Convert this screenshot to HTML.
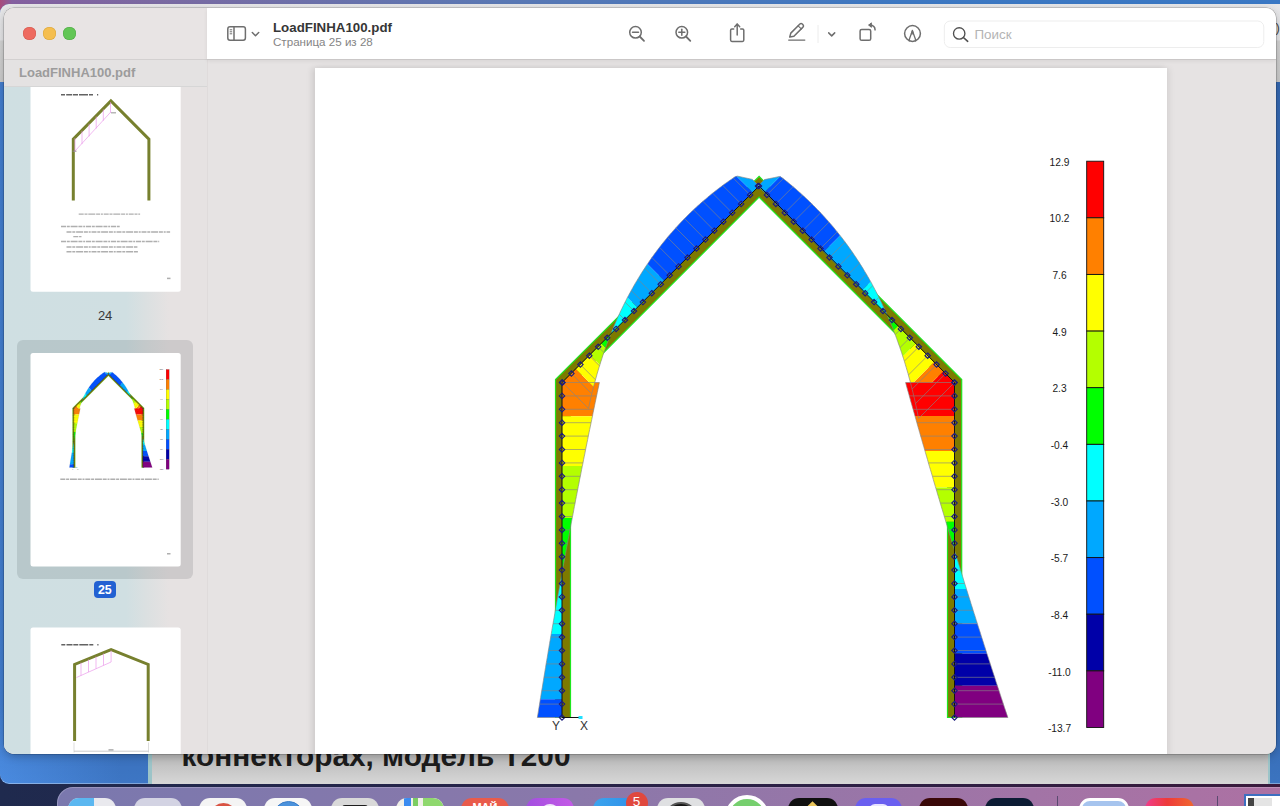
<!DOCTYPE html>
<html><head><meta charset="utf-8">
<style>
*{margin:0;padding:0;box-sizing:border-box}
html,body{width:1280px;height:806px;overflow:hidden;background:linear-gradient(90deg,#1f2a4e 0,#25254a 400px,#2e1f44 900px,#3a1a3c 1280px);font-family:"Liberation Sans",sans-serif}
.a{position:absolute}
#topstrip{left:0;top:0;width:1280px;height:14px;background:linear-gradient(90deg,#a84a7c 0px,#8460a0 12px,#7a6aa2 160px,#5a78b4 500px,#3d78c2 900px,#3a78c4 1280px)}
#bw{left:0;top:3.5px;width:1300px;height:780px;border-radius:9px 0 0 9px;box-shadow:inset 0 -1px 0 rgba(255,255,255,.35);background:linear-gradient(180deg,rgba(0,0,40,.10) 700px,rgba(0,0,0,0) 780px),linear-gradient(90deg,#4a8be0,#3d76c4 120px,#3b74c0);overflow:hidden}
#bwtitle{left:0;top:0;width:1300px;height:78.5px;background:linear-gradient(180deg,#e6e6e8 0,#e2e2e4 36px,#d2d2d2 37px,#c9c9c9 78px)}
#gw{left:148px;top:700px;width:1122px;height:83.5px;background:linear-gradient(180deg,#b0b0b0 0,#b8b8b8 53px,#c8c8c8 70px,#d6d6d6 83px);border-left:4px solid #9cc4c8;border-right:2px solid #9cc4c8}
#gwtext{left:181.6px;top:739.4px;font-size:29.8px;font-weight:700;color:#1c1c1c;white-space:nowrap;letter-spacing:0}
#dock{left:57px;top:787px;width:1300px;height:60px;border-radius:16px;background:linear-gradient(90deg,#7a78ae 0%,#8a78aa 40%,#a274a6 75%,#b070a2 100%);box-shadow:inset 0 0 0 1px rgba(255,255,255,.22)}
#win{left:3.5px;top:7.5px;width:1272.5px;height:746px;border-radius:10px;overflow:hidden;background:#e6e3e3;box-shadow:0 0 0 0.5px rgba(0,0,0,.3),0 3px 8px rgba(0,0,0,.22)}
#side{left:0;top:0;width:203.5px;height:746px;background:#e7e3e3}
#sidetb{left:0;top:0;width:203.5px;height:52.6px;background:#e8e4e4;border-bottom:1px solid #d3d0d0}
#sidehdr{left:0;top:52px;width:203.5px;height:27px;background:#e4e2e2;border-bottom:1px solid #d6d6d6}
#sidehdr span{position:absolute;left:15.5px;top:5.5px;font-size:13px;font-weight:700;color:#9c9c9c;white-space:nowrap}
#thumbs{left:0;top:79px;width:203.5px;height:667px;background:linear-gradient(90deg,#cfdfe2 0px,#d0dfe2 122px,#dbe0e1 142px,#e6e2e2 165px,#e6e2e2 203px)}
#tb{left:203.5px;top:0;width:1069px;height:52.6px;background:#fff;border-bottom:1.2px solid #cac7c7;box-shadow:0 1px 4px rgba(0,0,0,.07)}
#main{left:203.5px;top:52px;width:1069px;height:694px;background:#e6e3e3}
#page{left:311.4px;top:60.2px;width:852.6px;height:700px;background:#fff;box-shadow:-3px 0 6px rgba(0,0,0,.10),3px 0 6px rgba(0,0,0,.06)}
.t{position:absolute;white-space:nowrap}
</style></head><body>
<div id="topstrip" class="a"></div>
<div id="bw" class="a"><div id="bwtitle" class="a"></div></div>
<div id="gw" class="a"></div>
<div class="t" style="left:1275.5px;top:20px;font-size:13px;color:#444">)</div>
<div id="gwtext" class="a">коннекторах, модель T200</div>
<div id="dock" class="a"></div>
<div class="a" style="left:0;top:0;width:1280px;height:806px;overflow:hidden">
<div class="a" style="left:68px;top:798px;width:48px;height:48px;border-radius:11px;overflow:hidden;background:#e9e9ee"><div class="a" style="left:0;top:0;width:26px;height:48px;background:#5bb7f0"></div></div>
<div class="a" style="left:134px;top:798px;width:48.4px;height:48px;border-radius:11px;background:#d3d3e3"></div>
<div class="a" style="left:199.2px;top:798px;width:47.5px;height:48px;border-radius:11px;background:#f4f4f4;overflow:hidden"><div class="a" style="left:10.5px;top:4.7px;width:27px;height:27px;border-radius:50%;background:#d95343"></div></div>
<div class="a" style="left:264.2px;top:798px;width:47.9px;height:48px;border-radius:11px;background:#f6f6f6;overflow:hidden"><div class="a" style="left:8.5px;top:3px;width:31px;height:31px;border-radius:50%;background:#4b92dc;border:1px solid #3a7cc8"></div></div>
<div class="a" style="left:330.5px;top:798px;width:48px;height:48px;border-radius:11px;background:#d9d9d9;overflow:hidden"><div class="a" style="left:11.5px;top:6.5px;width:25.5px;height:30px;border-radius:3px;background:#1e1e1e"></div></div>
<div class="a" style="left:396px;top:798px;width:47.5px;height:48px;border-radius:11px;background:#f0efe8;overflow:hidden"><div class="a" style="left:8px;top:0;width:6.5px;height:48px;background:#3b8cf0"></div><div class="a" style="left:17px;top:0;width:5px;height:48px;background:#7ccd62"></div><div class="a" style="left:27px;top:0;width:21px;height:48px;background:#8fd86e;border-radius:0 11px 0 0"></div></div>
<div class="a" style="left:461px;top:798px;width:47.8px;height:48px;border-radius:11px;background:#e95b4b;overflow:hidden"><div class="t" style="left:0;width:47.8px;text-align:center;top:2.5px;font-size:11px;font-weight:700;color:#fff">МАЙ</div></div>
<div class="a" style="left:525.7px;top:798px;width:48.5px;height:48px;border-radius:11px;background:linear-gradient(90deg,#a34fe0,#c45ae6);overflow:hidden"><div class="a" style="left:14px;top:6px;width:20px;height:20px;border-radius:50%;background:#f2e8fa"></div></div>
<div class="a" style="left:592.6px;top:798px;width:48.4px;height:48px;border-radius:11px;background:linear-gradient(90deg,#3ba4ee,#2f8ee8)"></div>
<div class="a" style="left:625.6px;top:791.6px;width:22px;height:22px;border-radius:50%;background:#e0483e"></div>
<div class="t" style="left:625.6px;width:22px;text-align:center;top:793.5px;font-size:13.5px;color:#fff">5</div>
<div class="a" style="left:657.3px;top:798px;width:47.7px;height:48px;border-radius:11px;background:#dfe0e2;overflow:hidden"><div class="a" style="left:7px;top:3.5px;width:34px;height:34px;border-radius:50%;background:#151515;border:2px solid #555"></div></div>
<div class="a" style="left:725px;top:795px;width:44px;height:44px;border-radius:50%;background:#76cf6e;border:4px solid #fff"></div>
<div class="a" style="left:788px;top:798px;width:49.5px;height:48px;border-radius:11px;background:#101010;overflow:hidden"><div class="a" style="left:19.5px;top:5px;width:9px;height:9px;transform:rotate(45deg);background:#e8c45a"></div></div>
<div class="a" style="left:854.8px;top:798px;width:47px;height:48px;border-radius:11px;background:#6a5ff0;overflow:hidden"><div class="a" style="left:14px;top:6px;width:20px;height:14px;border-radius:6px;background:#e8e4ff"></div></div>
<div class="a" style="left:918.6px;top:798px;width:49.4px;height:48px;border-radius:11px;background:#3a0808"></div>
<div class="a" style="left:984.6px;top:798px;width:49.7px;height:48px;border-radius:11px;background:#0c1c34"></div>
<div class="a" style="left:1057px;top:796px;width:1px;height:12px;background:#5a4a70"></div>
<div class="a" style="left:1079.4px;top:798px;width:49.2px;height:48px;border-radius:11px;background:#a6c4ee;border:3.5px solid #fff"></div>
<div class="a" style="left:1144.5px;top:798px;width:49px;height:48px;border-radius:11px;background:linear-gradient(90deg,#f03c8c,#ee3a3a 45%,#f0682e)"></div>
<div class="a" style="left:1217.3px;top:796px;width:1px;height:12px;background:#5a4a70"></div>
<div class="a" style="left:1244px;top:794px;width:40px;height:20px;background:#fff;border:2px solid #3c6fc0"><div class="a" style="left:2px;top:2px;width:6px;height:20px;background:#444"></div><div class="a" style="left:8px;top:2px;width:18px;height:20px;background:#e4e4e4"></div></div>
</div>
<div id="win" class="a">
  <div id="side" class="a">
    <div id="sidetb" class="a"></div>
    <div id="sidehdr" class="a"><span>LoadFINHA100.pdf</span></div>
    <div id="thumbs" class="a"></div>
    <div class="a" style="left:0;top:79px;width:203.5px;height:667px;overflow:hidden"><div class="a" style="left:0;top:-79px;width:203.5px;height:746px">
    <div class="a" style="left:13.6px;top:332.5px;width:175.5px;height:238.5px;border-radius:6px;background:linear-gradient(90deg,#b8c8cb 0px,#b9c8cb 109px,#c4c9ca 129px,#cdcacb 152px)"></div>
    <svg class="a" style="left:0;top:0" width="203.5" height="746" viewBox="3.5 7.5 203.5 746">
      <g fill="#fff">
        <rect x="30" y="78" width="150.2" height="213.3" rx="2.5"/>
        <rect x="30" y="352.5" width="150.2" height="213.4" rx="2.5"/>
        <rect x="30" y="627.1" width="150.2" height="213.4" rx="2.5"/>
      </g>
      <!-- page 24 -->
      <g>
        <line x1="60.5" y1="94.3" x2="101.5" y2="94.3" stroke="#222" stroke-width="1.6" opacity="0.7" stroke-dasharray="4 1.2 6 0.8 5 1 9 1 4"/>
        <polyline points="72.8,200.1 72.8,138.7 110.4,100.5 148.4,138.7 148.4,200.1" fill="none" stroke="#77802e" stroke-width="3" stroke-linejoin="miter"/>
        <g stroke="#e88ae8" stroke-width="0.6" fill="none">
          <line x1="73.6" y1="151.5" x2="110.4" y2="111.4"/>
          <line x1="74.5" y1="137.5" x2="74.5" y2="151"/>
          <line x1="81.5" y1="130.3" x2="81.5" y2="143.6"/>
          <line x1="88.6" y1="123.2" x2="88.6" y2="135.8"/>
          <line x1="95.7" y1="116" x2="95.7" y2="128"/>
          <line x1="102.8" y1="108.8" x2="102.8" y2="120.2"/>
          <line x1="110" y1="101.5" x2="110" y2="112"/>
        </g>
        <rect x="110.5" y="111.5" width="5" height="1.5" fill="#888" opacity="0.6"/>
        <rect x="72" y="150" width="4" height="1.5" fill="#888" opacity="0.6"/>
        <g stroke="#7a7a7a" opacity="0.6" fill="none">
          <line x1="78.2" y1="213.6" x2="139.6" y2="213.6" stroke-width="1.4" stroke-dasharray="5 0.8 3 0.8 7 0.8 4 0.8 2 0.8"/>
          <line x1="60.5" y1="226.0" x2="119.2" y2="226.0" stroke-width="1.4" stroke-dasharray="5 0.8 3 0.8 7 0.8 4 0.8 2 0.8"/>
          <line x1="66.0" y1="231.5" x2="169.6" y2="231.5" stroke-width="1.5" stroke-dasharray="5 0.8 3 0.8 7 0.8 4 0.8 2 0.8"/>
          <line x1="72.8" y1="236.1" x2="81.0" y2="236.1" stroke-width="1.3" stroke-dasharray="5 0.8 3 0.8 7 0.8 4 0.8 2 0.8"/>
          <line x1="60.5" y1="241.0" x2="158.7" y2="241.0" stroke-width="1.4" stroke-dasharray="5 0.8 3 0.8 7 0.8 4 0.8 2 0.8"/>
          <line x1="66.0" y1="246.5" x2="136.9" y2="246.5" stroke-width="1.5" stroke-dasharray="5 0.8 3 0.8 7 0.8 4 0.8 2 0.8"/>
          <line x1="66.0" y1="251.3" x2="137.4" y2="251.3" stroke-width="1.5" stroke-dasharray="5 0.8 3 0.8 7 0.8 4 0.8 2 0.8"/>
          <line x1="166.5" y1="277.9" x2="170.0" y2="277.9" stroke-width="1.5" stroke-dasharray="5 0.8 3 0.8 7 0.8 4 0.8 2 0.8"/>
        </g>
      </g>
      <!-- page 25 -->
      <use href="#chart" transform="translate(-25.65,340.7) scale(0.1761)"/>
      <g stroke="#7a7a7a" opacity="0.6" fill="none">
        <line x1="59.8" y1="478.8" x2="158.2" y2="478.8" stroke-width="1.4" stroke-dasharray="5 0.8 3 0.8 7 0.8 4 0.8 2 0.8"/>
        <line x1="166.5" y1="553.2" x2="170.0" y2="553.2" stroke-width="1.5" stroke-dasharray="5 0.8 3 0.8 7 0.8 4 0.8 2 0.8"/>
      </g>
      <!-- page 26 -->
      <g>
        <line x1="60.8" y1="644.2" x2="102.2" y2="644.2" stroke="#222" stroke-width="1.6" opacity="0.7" stroke-dasharray="4 1.2 6 0.8 5 1 9 1 4"/>
        <polyline points="74.1,740.5 74.1,663.9 110.6,649 147.7,663.9 147.7,740.5" fill="none" stroke="#77802e" stroke-width="3" stroke-linejoin="miter"/>
        <g stroke="#e88ae8" stroke-width="0.6" fill="none">
          <line x1="76" y1="677" x2="110.6" y2="661.5"/>
          <line x1="80.5" y1="662" x2="80.5" y2="675"/>
          <line x1="88" y1="659" x2="88" y2="671.5"/>
          <line x1="95.5" y1="656" x2="95.5" y2="668.2"/>
          <line x1="103" y1="653" x2="103" y2="664.8"/>
          <line x1="110.6" y1="650" x2="110.6" y2="661.5"/>
        </g>
        <line x1="73.5" y1="750.7" x2="148" y2="750.7" stroke="#aaa" stroke-width="0.6"/>
        <line x1="73.5" y1="742" x2="73.5" y2="752" stroke="#bbb" stroke-width="0.5"/>
        <line x1="148" y1="742" x2="148" y2="752" stroke="#bbb" stroke-width="0.5"/>
        <rect x="108" y="748.8" width="5" height="1.2" fill="#999"/>
      </g>
    </svg>
    <div class="t" style="left:94.4px;top:300.6px;font-size:13px;color:#3a3a3a">24</div>
    <div class="a" style="left:90.5px;top:573.2px;width:22.2px;height:17px;border-radius:4px;background:#2261d2"></div>
    <div class="t" style="left:94.4px;top:575.8px;font-size:12.4px;font-weight:700;color:#fff">25</div>
    </div></div>
  </div>
  <div id="main" class="a"></div>
  <div class="a" style="left:203.5px;top:52px;width:1px;height:694px;background:#dfdbdb"></div>
  <div id="page" class="a"></div>
<svg class="a" style="left:0;top:0" width="1272.5" height="746" viewBox="3.5 7.5 1272.5 746">
<g id="chart">
<!--CHART--><polygon points="555.0,717.0 555.0,379.0 758.6,175.9 961.2,379.0 961.2,717.0 947.0,717.0 947.0,385.1 758.6,196.7 570.0,385.3 570.0,717.0" fill="#7d7a00" stroke="#1ee61e" stroke-width="1.2"/>
<g><polygon points="561.5,382.0 598.9,382.0 598.5,384.1 598.1,386.2 597.6,388.3 597.2,390.4 596.7,392.6 596.3,394.7 595.8,396.8 595.4,398.9 595.0,401.0 594.5,403.1 594.1,405.2 593.6,407.4 593.2,409.5 592.8,411.6 592.3,413.7 591.9,415.8 561.5,415.8" fill="#ff8000"/><polygon points="561.5,415.8 591.9,415.8 591.5,417.9 591.0,419.9 590.6,422.0 590.2,424.1 589.8,426.2 589.3,428.2 588.9,430.3 588.5,432.4 588.1,434.4 587.7,436.5 587.2,438.6 586.8,440.6 586.4,442.7 586.0,444.8 585.6,446.9 585.1,448.9 584.7,451.0 584.3,453.1 583.9,455.1 583.5,457.2 583.1,459.3 582.7,461.4 582.2,463.4 581.8,465.5 561.5,465.5" fill="#ffff00"/><polygon points="561.5,465.5 581.8,465.5 581.4,467.5 581.0,469.5 580.6,471.5 580.2,473.5 579.9,475.5 579.5,477.5 579.1,479.5 578.7,481.5 578.3,483.5 577.9,485.5 577.5,487.5 577.1,489.5 576.7,491.6 576.3,493.6 575.9,495.6 575.6,497.6 575.2,499.6 574.8,501.6 574.4,503.6 574.0,505.6 573.6,507.6 573.2,509.6 572.9,511.6 572.5,513.6 572.1,515.6 571.7,517.6 561.5,517.6" fill="#b4ff00"/><polygon points="561.5,517.6 571.7,517.6 571.3,519.6 570.9,521.6 570.6,523.6 570.2,525.7 569.8,527.7 569.4,529.7 569.0,531.7 568.7,533.7 568.3,535.7 567.9,537.7 567.5,539.8 567.2,541.8 566.8,543.8 566.4,545.8 566.0,547.8 565.7,549.8 565.3,551.9 564.9,553.9 564.5,555.9 564.2,557.9 563.8,559.9 563.4,561.9 563.1,563.9 562.7,566.0 562.3,568.0 562.0,570.0 561.6,572.0 561.5,572.0" fill="#00ff00"/><polygon points="561.5,572.0 561.6,572.0 561.2,574.0 560.9,576.1 560.5,578.1 560.1,580.2 559.7,582.2 559.4,584.3 559.0,586.4 558.6,588.4 558.3,590.5 557.9,592.5 557.5,594.5 557.2,596.6 556.8,598.6 556.4,600.7 556.1,602.8 555.7,604.8 555.4,606.9 555.0,608.9 554.6,611.0 554.3,613.0 553.9,615.0 553.6,617.1 553.2,619.1 552.8,621.2 552.5,623.2 552.1,625.3 551.8,627.4 551.4,629.4 551.1,631.5 550.7,633.5 561.5,633.5" fill="#00ffff"/><polygon points="561.5,633.5 550.7,633.5 550.4,635.5 550.0,637.6 549.7,639.6 549.3,641.6 549.0,643.7 548.6,645.7 548.3,647.8 547.9,649.8 547.6,651.8 547.3,653.9 546.9,655.9 546.6,658.0 546.2,660.0 545.9,662.0 545.5,664.1 545.2,666.1 544.9,668.1 544.5,670.2 544.2,672.2 543.8,674.2 543.5,676.3 543.2,678.3 542.8,680.4 542.5,682.4 542.2,684.4 541.8,686.5 541.5,688.5 541.2,690.6 540.8,692.6 540.5,694.6 540.2,696.7 539.8,698.7 561.5,698.7" fill="#00a8ff"/><polygon points="561.5,698.7 539.8,698.7 539.5,700.7 539.2,702.8 538.9,704.8 538.5,706.8 538.2,708.9 537.9,710.9 537.6,712.9 537.2,715.0 536.9,717.0 561.5,717.0" fill="#0050ff"/><polygon points="562.0,382.0 588.0,408.0 588.5,405.5 589.0,403.1 589.6,400.6 590.2,398.2 590.7,395.8 591.3,393.4 591.9,391.0 592.5,388.6 593.1,386.2 575.4,368.6" fill="#ff8000"/><polygon points="575.4,368.6 593.1,386.2 593.7,384.0 594.3,381.8 594.9,379.5 595.5,377.3 596.1,375.1 596.8,372.9 597.4,370.7 598.1,368.6 598.7,366.4 599.4,364.2 589.6,354.4" fill="#ffff00"/><polygon points="589.6,354.4 599.4,364.2 600.1,362.1 600.8,359.9 601.4,357.8 602.2,355.7 602.9,353.6 603.6,351.5 604.3,349.4 605.1,347.3 600.9,343.1" fill="#b4ff00"/><polygon points="600.9,343.1 605.1,347.3 605.9,345.0 606.7,342.8 607.5,340.6 608.3,338.4 609.2,336.2 610.0,334.1 610.9,331.9 611.5,332.5" fill="#00ff00"/><polygon points="611.5,332.5 610.9,331.9 611.7,329.9 612.5,327.9 613.4,325.9 614.2,323.9 615.1,321.9 615.9,320.0 616.8,318.0 617.7,316.0 618.6,314.1 619.4,312.2 620.4,310.2 621.3,308.3 622.2,306.4 623.1,304.5 624.1,302.6 625.0,300.8 626.0,298.9 626.9,297.0 637.0,307.0" fill="#00ffff"/><polygon points="637.0,307.0 626.9,297.0 627.9,295.2 628.9,293.3 629.9,291.5 630.9,289.7 631.9,287.9 632.9,286.1 634.0,284.3 635.0,282.5 636.1,280.7 637.1,278.9 638.2,277.2 639.2,275.4 640.3,273.7 641.4,271.9 642.5,270.2 643.6,268.5 644.8,266.8 645.9,265.1 647.0,263.4 663.8,280.2" fill="#00a8ff"/><polygon points="663.8,280.2 647.0,263.4 648.2,261.7 649.3,260.0 650.5,258.3 651.7,256.6 652.9,255.0 654.1,253.3 655.3,251.7 656.5,250.1 657.7,248.4 659.0,246.8 660.2,245.2 661.5,243.6 662.8,242.0 664.0,240.5 665.3,238.9 666.6,237.3 667.9,235.8 669.2,234.2 670.5,232.7 671.9,231.2 673.2,229.7 674.5,228.2 675.9,226.7 677.3,225.2 678.6,223.7 680.0,222.2 681.4,220.8 682.8,219.3 684.2,217.9 685.6,216.5 687.1,215.0 688.5,213.6 689.9,212.2 691.4,210.8 692.9,209.4 694.3,208.0 695.8,206.7 697.3,205.3 698.8,204.0 700.3,202.6 701.8,201.3 703.4,200.0 704.9,198.7 706.5,197.4 708.0,196.1 709.6,194.8 711.1,193.5 712.7,192.2 714.3,191.0 715.9,189.7 717.5,188.5 719.1,187.2 720.8,186.0 722.4,184.8 724.1,183.6 725.7,182.4 727.4,181.2 729.0,180.0 730.7,178.9 732.4,177.7 734.1,176.5 735.8,175.4 752.2,191.8" fill="#0050ff"/><polygon points="752.2,191.8 735.8,175.4 739.9,176.3 743.9,177.2 747.9,178.1 751.9,178.9 758.5,185.5" fill="#00a8ff"/><polygon points="954.0,382.0 918.1,417.9 917.6,415.6 917.1,413.2 916.7,410.9 916.2,408.5 915.7,406.2 915.2,403.9 914.7,401.5 914.1,399.2 942.7,370.7" fill="#ff0000"/><polygon points="942.7,370.7 914.1,399.2 913.6,396.7 913.0,394.3 912.4,391.8 911.8,389.3 911.2,386.9 910.6,384.4 933.5,361.5" fill="#ff8000"/><polygon points="933.5,361.5 910.6,384.4 910.0,382.2 909.4,379.9 908.8,377.7 908.2,375.5 907.6,373.3 906.9,371.1 906.3,368.9 905.7,366.7 905.0,364.5 904.4,362.4 903.7,360.2 903.0,358.0 902.3,355.9 915.1,343.1" fill="#ffff00"/><polygon points="915.1,343.1 902.3,355.9 901.6,353.7 900.9,351.5 900.1,349.3 899.4,347.1 898.6,344.9 897.8,342.7 897.1,340.5 896.3,338.4 895.5,336.2 894.7,334.1 893.9,331.9 893.0,329.8 897.4,325.4" fill="#b4ff00"/><polygon points="897.4,325.4 893.0,329.8 892.2,327.8 891.4,325.8 890.6,323.8 889.8,321.8 888.9,319.8 888.1,317.8 887.3,315.8 887.5,315.5" fill="#00ff00"/><polygon points="887.5,315.5 887.3,315.8 886.4,313.8 885.5,311.8 884.6,309.8 883.7,307.9 882.8,305.9 881.9,304.0 881.0,302.0 880.0,300.1 879.1,298.2 878.1,296.2 877.2,294.3 876.2,292.4 875.2,290.6 874.2,288.7 873.3,286.8 872.2,284.9 871.2,283.1 870.2,281.2 861.7,289.7" fill="#00ffff"/><polygon points="861.7,289.7 870.2,281.2 869.2,279.4 868.2,277.6 867.1,275.8 866.1,274.0 865.0,272.2 863.9,270.4 862.9,268.6 861.8,266.8 860.7,265.1 859.6,263.3 858.5,261.6 857.3,259.8 856.2,258.1 855.1,256.4 853.9,254.7 852.8,253.0 851.6,251.3 850.4,249.6 849.3,248.0 848.1,246.3 846.9,244.6 845.7,243.0 844.4,241.3 843.2,239.7 842.0,238.1 840.7,236.5 839.5,234.9 823.2,251.2" fill="#00a8ff"/><polygon points="823.2,251.2 839.5,234.9 838.2,233.3 837.0,231.7 835.7,230.2 834.4,228.6 833.2,227.1 831.9,225.5 830.6,224.0 829.3,222.5 828.0,221.0 826.6,219.5 825.3,218.0 824.0,216.5 822.6,215.0 821.2,213.5 819.9,212.1 818.5,210.6 817.1,209.2 815.7,207.7 814.3,206.3 812.9,204.9 811.5,203.5 810.1,202.1 808.6,200.7 807.2,199.3 805.7,197.9 804.3,196.6 802.8,195.2 801.3,193.9 799.8,192.5 798.3,191.2 796.8,189.9 795.3,188.5 793.8,187.2 792.3,185.9 790.7,184.6 789.2,183.4 787.6,182.1 786.1,180.8 784.5,179.6 782.9,178.3 781.3,177.1 779.7,175.8 763.8,191.8" fill="#0050ff"/><polygon points="763.8,191.8 779.7,175.8 775.8,176.7 771.8,177.5 767.8,178.3 763.9,179.1 757.5,185.5" fill="#00a8ff"/><polygon points="954.0,382.0 905.1,382.0 905.6,384.1 906.2,386.2 906.8,388.3 907.4,390.4 908.0,392.5 908.6,394.6 909.2,396.7 909.8,398.8 910.3,400.9 910.9,403.0 911.5,405.1 912.1,407.2 912.7,409.3 913.3,411.4 913.9,413.5 914.5,415.6 954.0,415.6" fill="#ff0000"/><polygon points="954.0,415.6 914.5,415.6 915.1,417.6 915.7,419.7 916.2,421.7 916.8,423.8 917.4,425.8 918.0,427.9 918.6,429.9 919.2,432.0 919.7,434.0 920.3,436.1 920.9,438.1 921.5,440.2 922.1,442.2 922.7,444.3 923.3,446.3 923.9,448.4 924.5,450.4 954.0,450.4" fill="#ff8000"/><polygon points="954.0,450.4 924.5,450.4 925.1,452.4 925.6,454.5 926.2,456.5 926.8,458.5 927.4,460.6 928.0,462.6 928.6,464.6 929.2,466.7 929.8,468.7 930.4,470.7 931.0,472.8 931.6,474.8 932.2,476.8 932.8,478.9 933.4,480.9 934.0,482.9 934.6,485.0 935.2,487.0 954.0,487.0" fill="#ffff00"/><polygon points="954.0,487.0 935.2,487.0 935.8,489.0 936.4,491.0 936.9,493.1 937.5,495.1 938.1,497.1 938.7,499.1 939.3,501.1 939.9,503.1 940.5,505.2 941.1,507.2 941.8,509.2 942.4,511.2 943.0,513.2 943.6,515.2 944.2,517.3 944.8,519.3 945.4,521.3 954.0,521.3" fill="#b4ff00"/><polygon points="954.0,521.3 945.4,521.3 946.0,523.4 946.7,525.5 947.3,527.6 947.9,529.8 948.6,531.9 949.2,534.0 949.8,536.1 950.5,538.2 951.1,540.3 951.8,542.4 952.4,544.5 953.1,546.7 953.7,548.8 954.4,550.9 955.0,553.0 954.0,553.0" fill="#00ff00"/><polygon points="954.0,553.0 955.0,553.0 955.6,555.1 956.3,557.2 956.9,559.2 957.6,561.3 958.2,563.4 958.8,565.5 959.5,567.6 960.1,569.7 960.8,571.7 961.4,573.8 962.0,575.9 962.7,578.0 963.3,580.1 964.0,582.2 964.6,584.2 965.3,586.3 965.9,588.4 954.0,588.4" fill="#00ffff"/><polygon points="954.0,588.4 965.9,588.4 966.6,590.4 967.2,592.5 967.8,594.5 968.5,596.6 969.1,598.6 969.8,600.6 970.4,602.7 971.0,604.7 971.7,606.8 972.3,608.8 973.0,610.9 973.6,612.9 974.3,614.9 974.9,617.0 975.5,619.0 976.2,621.1 976.8,623.1 954.0,623.1" fill="#00a8ff"/><polygon points="954.0,623.1 976.8,623.1 977.5,625.2 978.2,627.4 978.9,629.5 979.6,631.6 980.2,633.7 980.9,635.9 981.6,638.0 982.3,640.1 983.0,642.3 983.6,644.4 984.3,646.5 985.0,648.6 985.7,650.8 986.4,652.9 954.0,652.9" fill="#0050ff"/><polygon points="954.0,652.9 986.4,652.9 987.0,654.9 987.7,656.9 988.3,659.0 989.0,661.0 989.6,663.0 990.3,665.0 990.9,667.0 991.6,669.0 992.3,671.1 992.9,673.1 993.6,675.1 994.2,677.1 994.9,679.1 995.5,681.2 996.2,683.2 996.9,685.2 954.0,685.2" fill="#0000a8"/><polygon points="954.0,685.2 996.9,685.2 997.6,687.3 998.3,689.4 998.9,691.6 999.6,693.7 1000.3,695.8 1001.0,697.9 1001.7,700.0 1002.4,702.2 1003.1,704.3 1003.8,706.4 1004.5,708.5 1005.2,710.6 1006.0,712.8 1006.7,714.9 1007.4,717.0 954.0,717.0" fill="#800080"/></g>
<g stroke="#858585" stroke-width="0.8" opacity="0.8"><line x1="561.5" y1="382.0" x2="598.9" y2="382.0"/><line x1="561.5" y1="395.4" x2="596.1" y2="395.4"/><line x1="561.5" y1="408.8" x2="593.3" y2="408.8"/><line x1="561.5" y1="422.2" x2="590.6" y2="422.2"/><line x1="561.5" y1="435.6" x2="587.8" y2="435.6"/><line x1="561.5" y1="449.0" x2="585.1" y2="449.0"/><line x1="561.5" y1="462.4" x2="582.5" y2="462.4"/><line x1="561.5" y1="475.8" x2="579.8" y2="475.8"/><line x1="561.5" y1="489.2" x2="577.2" y2="489.2"/><line x1="561.5" y1="502.6" x2="574.6" y2="502.6"/><line x1="561.5" y1="516.0" x2="572.0" y2="516.0"/><line x1="561.5" y1="529.4" x2="569.5" y2="529.4"/><line x1="561.5" y1="542.8" x2="567.0" y2="542.8"/><line x1="561.5" y1="556.2" x2="564.5" y2="556.2"/><line x1="561.5" y1="569.6" x2="562.0" y2="569.6"/><line x1="561.5" y1="583.0" x2="559.6" y2="583.0"/><line x1="561.5" y1="596.4" x2="557.2" y2="596.4"/><line x1="561.5" y1="609.8" x2="554.8" y2="609.8"/><line x1="561.5" y1="623.2" x2="552.5" y2="623.2"/><line x1="561.5" y1="636.6" x2="550.2" y2="636.6"/><line x1="561.5" y1="650.0" x2="547.9" y2="650.0"/><line x1="561.5" y1="663.4" x2="545.6" y2="663.4"/><line x1="561.5" y1="676.8" x2="543.4" y2="676.8"/><line x1="561.5" y1="690.2" x2="541.2" y2="690.2"/><line x1="561.5" y1="703.6" x2="539.1" y2="703.6"/><line x1="561.5" y1="717.0" x2="536.9" y2="717.0"/><polyline fill="none" points="598.9,382.0 598.2,385.4 597.5,388.7 596.8,392.1 596.1,395.4 595.4,398.8 594.7,402.1 594.0,405.4 593.3,408.8 592.6,412.1 592.0,415.5 591.3,418.9 590.6,422.2 589.9,425.6 589.2,428.9 588.5,432.2 587.8,435.6 587.2,438.9 586.5,442.3 585.8,445.6 585.1,449.0 584.5,452.4 583.8,455.7 583.1,459.1 582.5,462.4 581.8,465.8 581.1,469.1 580.5,472.4 579.8,475.8 579.1,479.1 578.5,482.5 577.8,485.9 577.2,489.2 576.5,492.6 575.9,495.9 575.2,499.2 574.6,502.6 573.9,505.9 573.3,509.3 572.7,512.6 572.0,516.0 571.4,519.4 570.7,522.7 570.1,526.0 569.5,529.4 568.8,532.8 568.2,536.1 567.6,539.5 567.0,542.8 566.3,546.1 565.7,549.5 565.1,552.9 564.5,556.2 563.9,559.5 563.3,562.9 562.6,566.2 562.0,569.6 561.4,573.0 560.8,576.3 560.2,579.6 559.6,583.0 559.0,586.4 558.4,589.7 557.8,593.0 557.2,596.4 556.6,599.8 556.0,603.1 555.4,606.5 554.8,609.8 554.3,613.1 553.7,616.5 553.1,619.9 552.5,623.2 551.9,626.5 551.3,629.9 550.8,633.2 550.2,636.6 549.6,640.0 549.0,643.3 548.5,646.6 547.9,650.0 547.3,653.4 546.8,656.7 546.2,660.0 545.6,663.4 545.1,666.8 544.5,670.1 544.0,673.5 543.4,676.8 542.9,680.1 542.3,683.5 541.8,686.9 541.2,690.2 540.7,693.5 540.1,696.9 539.6,700.2 539.1,703.6 538.5,707.0 538.0,710.3 537.4,713.6 536.9,717.0"/><line x1="562.0" y1="382.0" x2="588.0" y2="408.0"/><line x1="570.9" y1="373.1" x2="591.3" y2="393.4"/><line x1="579.9" y1="364.1" x2="595.0" y2="379.3"/><line x1="588.8" y1="355.2" x2="599.0" y2="365.4"/><line x1="597.7" y1="346.3" x2="603.4" y2="352.0"/><line x1="606.7" y1="337.3" x2="608.2" y2="338.8"/><line x1="615.6" y1="328.4" x2="613.3" y2="326.1"/><line x1="624.5" y1="319.5" x2="618.7" y2="313.7"/><line x1="633.5" y1="310.5" x2="624.6" y2="301.7"/><line x1="642.4" y1="301.6" x2="630.7" y2="290.0"/><line x1="651.3" y1="292.7" x2="637.3" y2="278.6"/><line x1="660.2" y1="283.8" x2="644.2" y2="267.7"/><line x1="669.2" y1="274.8" x2="651.4" y2="257.0"/><line x1="678.1" y1="265.9" x2="659.0" y2="246.8"/><line x1="687.0" y1="257.0" x2="667.0" y2="236.9"/><line x1="696.0" y1="248.0" x2="675.3" y2="227.3"/><line x1="704.9" y1="239.1" x2="684.0" y2="218.1"/><line x1="713.8" y1="230.2" x2="693.0" y2="209.3"/><line x1="722.8" y1="221.2" x2="702.4" y2="200.8"/><line x1="731.7" y1="212.3" x2="712.1" y2="192.7"/><line x1="740.6" y1="203.4" x2="722.2" y2="184.9"/><line x1="749.6" y1="194.4" x2="732.7" y2="177.5"/><line x1="758.5" y1="185.5" x2="751.9" y2="178.9"/><polyline fill="none" points="588.0,408.0 588.7,404.7 589.4,401.5 590.1,398.3 590.9,395.2 591.6,392.0 592.4,388.9 593.2,385.7 594.1,382.6 594.9,379.5 595.8,376.5 596.6,373.4 597.5,370.4 598.4,367.3 599.4,364.3 600.3,361.3 601.3,358.4 602.2,355.4 603.2,352.5 604.2,349.6 605.3,346.7 606.3,343.8 607.4,340.9 608.5,338.1 609.6,335.2 610.7,332.4 611.8,329.6 613.0,326.8 614.1,324.1 615.3,321.3 616.5,318.6 617.7,315.9 619.0,313.2 620.2,310.5 621.5,307.9 622.8,305.2 624.1,302.6 625.4,300.0 626.7,297.4 628.1,294.8 629.5,292.3 630.9,289.7 632.3,287.2 633.7,284.7 635.1,282.2 636.6,279.8 638.1,277.3 639.6,274.9 641.1,272.4 642.6,270.0 644.2,267.7 645.7,265.3 647.3,263.0 648.9,260.6 650.5,258.3 652.2,256.0 653.8,253.7 655.5,251.5 657.2,249.2 658.9,247.0 660.6,244.8 662.3,242.6 664.1,240.4 665.8,238.2 667.6,236.1 669.4,234.0 671.3,231.9 673.1,229.8 675.0,227.7 676.8,225.7 678.7,223.6 680.6,221.6 682.6,219.6 684.5,217.6 686.5,215.6 688.4,213.7 690.4,211.7 692.4,209.8 694.5,207.9 696.5,206.0 698.6,204.2 700.7,202.3 702.8,200.5 704.9,198.7 707.0,196.9 709.2,195.1 711.3,193.3 713.5,191.6 715.7,189.9 717.9,188.2 720.2,186.5 722.4,184.8 724.7,183.1 727.0,181.5 729.3,179.9 731.6,178.3 733.9,176.7 736.8,175.6 741.9,176.7 746.9,177.8 751.9,178.9"/><line x1="954.0" y1="382.0" x2="918.1" y2="417.9"/><line x1="945.1" y1="373.1" x2="915.0" y2="403.1"/><line x1="936.1" y1="364.1" x2="911.6" y2="388.6"/><line x1="927.2" y1="355.2" x2="907.9" y2="374.5"/><line x1="918.3" y1="346.3" x2="903.8" y2="360.7"/><line x1="909.3" y1="337.3" x2="899.4" y2="347.2"/><line x1="900.4" y1="328.4" x2="894.7" y2="334.1"/><line x1="891.5" y1="319.5" x2="889.6" y2="321.3"/><line x1="882.5" y1="310.5" x2="884.2" y2="308.9"/><line x1="873.6" y1="301.6" x2="878.4" y2="296.8"/><line x1="864.7" y1="292.7" x2="872.3" y2="285.1"/><line x1="855.8" y1="283.8" x2="865.9" y2="273.6"/><line x1="846.8" y1="274.8" x2="859.1" y2="262.6"/><line x1="837.9" y1="265.9" x2="852.0" y2="251.8"/><line x1="829.0" y1="257.0" x2="844.5" y2="241.4"/><line x1="820.0" y1="248.0" x2="836.7" y2="231.4"/><line x1="811.1" y1="239.1" x2="828.5" y2="221.6"/><line x1="802.2" y1="230.2" x2="820.1" y2="212.3"/><line x1="793.2" y1="221.2" x2="811.2" y2="203.2"/><line x1="784.3" y1="212.3" x2="802.1" y2="194.5"/><line x1="775.4" y1="203.4" x2="792.6" y2="186.2"/><line x1="766.4" y1="194.4" x2="782.7" y2="178.2"/><line x1="757.5" y1="185.5" x2="763.9" y2="179.1"/><polyline fill="none" points="918.1,417.9 917.4,414.6 916.8,411.4 916.1,408.1 915.4,404.9 914.7,401.7 914.0,398.4 913.2,395.3 912.5,392.1 911.7,388.9 910.9,385.8 910.1,382.7 909.3,379.6 908.4,376.5 907.6,373.4 906.7,370.3 905.8,367.3 904.9,364.3 904.0,361.2 903.1,358.3 902.1,355.3 901.2,352.3 900.2,349.4 899.2,346.4 898.1,343.5 897.1,340.6 896.1,337.8 895.0,334.9 893.9,332.1 892.8,329.2 891.7,326.4 890.5,323.6 889.4,320.8 888.2,318.1 887.0,315.3 885.8,312.6 884.6,309.9 883.4,307.2 882.1,304.5 880.9,301.8 879.6,299.2 878.3,296.6 877.0,294.0 875.7,291.4 874.3,288.8 872.9,286.2 871.6,283.7 870.2,281.1 868.7,278.6 867.3,276.1 865.9,273.6 864.4,271.2 862.9,268.7 861.4,266.3 859.9,263.9 858.4,261.5 856.8,259.1 855.3,256.7 853.7,254.4 852.1,252.0 850.5,249.7 848.9,247.4 847.2,245.1 845.6,242.9 843.9,240.6 842.2,238.4 840.5,236.1 838.7,233.9 837.0,231.8 835.2,229.6 833.5,227.4 831.7,225.3 829.9,223.2 828.0,221.1 826.2,219.0 824.3,216.9 822.5,214.9 820.6,212.8 818.7,210.8 816.7,208.8 814.8,206.8 812.8,204.8 810.9,202.9 808.9,200.9 806.9,199.0 804.8,197.1 802.8,195.2 800.8,193.3 798.7,191.5 796.6,189.6 794.5,187.8 792.4,186.0 790.2,184.2 788.1,182.4 785.9,180.7 783.7,178.9 781.5,177.2 778.7,176.0 773.8,177.1 768.8,178.1 763.9,179.1"/><line x1="954.0" y1="382.0" x2="905.1" y2="382.0"/><line x1="954.0" y1="395.4" x2="908.8" y2="395.4"/><line x1="954.0" y1="408.8" x2="912.6" y2="408.8"/><line x1="954.0" y1="422.2" x2="916.4" y2="422.2"/><line x1="954.0" y1="435.6" x2="920.2" y2="435.6"/><line x1="954.0" y1="449.0" x2="924.1" y2="449.0"/><line x1="954.0" y1="462.4" x2="927.9" y2="462.4"/><line x1="954.0" y1="475.8" x2="931.9" y2="475.8"/><line x1="954.0" y1="489.2" x2="935.8" y2="489.2"/><line x1="954.0" y1="502.6" x2="939.8" y2="502.6"/><line x1="954.0" y1="516.0" x2="943.8" y2="516.0"/><line x1="954.0" y1="529.4" x2="947.8" y2="529.4"/><line x1="954.0" y1="542.8" x2="951.9" y2="542.8"/><line x1="954.0" y1="556.2" x2="956.0" y2="556.2"/><line x1="954.0" y1="569.6" x2="960.1" y2="569.6"/><line x1="954.0" y1="583.0" x2="964.2" y2="583.0"/><line x1="954.0" y1="596.4" x2="968.4" y2="596.4"/><line x1="954.0" y1="609.8" x2="972.6" y2="609.8"/><line x1="954.0" y1="623.2" x2="976.9" y2="623.2"/><line x1="954.0" y1="636.6" x2="981.1" y2="636.6"/><line x1="954.0" y1="650.0" x2="985.4" y2="650.0"/><line x1="954.0" y1="663.4" x2="989.8" y2="663.4"/><line x1="954.0" y1="676.8" x2="994.1" y2="676.8"/><line x1="954.0" y1="690.2" x2="998.5" y2="690.2"/><line x1="954.0" y1="703.6" x2="1002.9" y2="703.6"/><line x1="954.0" y1="717.0" x2="1007.4" y2="717.0"/><polyline fill="none" points="905.1,382.0 906.0,385.4 906.9,388.7 907.9,392.1 908.8,395.4 909.7,398.8 910.7,402.1 911.6,405.4 912.6,408.8 913.5,412.1 914.5,415.5 915.4,418.9 916.4,422.2 917.3,425.6 918.3,428.9 919.2,432.2 920.2,435.6 921.2,438.9 922.1,442.3 923.1,445.6 924.1,449.0 925.0,452.4 926.0,455.7 927.0,459.1 927.9,462.4 928.9,465.8 929.9,469.1 930.9,472.4 931.9,475.8 932.8,479.1 933.8,482.5 934.8,485.9 935.8,489.2 936.8,492.6 937.8,495.9 938.8,499.2 939.8,502.6 940.8,505.9 941.8,509.3 942.8,512.6 943.8,516.0 944.8,519.4 945.8,522.7 946.8,526.0 947.8,529.4 948.8,532.8 949.8,536.1 950.9,539.5 951.9,542.8 952.9,546.1 953.9,549.5 955.0,552.9 956.0,556.2 957.0,559.5 958.0,562.9 959.1,566.2 960.1,569.6 961.1,573.0 962.2,576.3 963.2,579.6 964.2,583.0 965.3,586.4 966.3,589.7 967.4,593.0 968.4,596.4 969.5,599.8 970.5,603.1 971.6,606.5 972.6,609.8 973.7,613.1 974.8,616.5 975.8,619.9 976.9,623.2 977.9,626.5 979.0,629.9 980.1,633.2 981.1,636.6 982.2,640.0 983.3,643.3 984.4,646.6 985.4,650.0 986.5,653.4 987.6,656.7 988.7,660.0 989.8,663.4 990.9,666.8 991.9,670.1 993.0,673.5 994.1,676.8 995.2,680.1 996.3,683.5 997.4,686.9 998.5,690.2 999.6,693.5 1000.7,696.9 1001.8,700.2 1002.9,703.6 1004.0,707.0 1005.1,710.3 1006.2,713.6 1007.4,717.0"/></g>
<polyline points="561.5,717.0 561.5,382.0 758.6,185.5 954.0,382.0 954.0,717.0" fill="none" stroke="#111" stroke-width="1"/>
<g fill="none" stroke="#1c1c7c" stroke-width="1.15"><path d="M561.5 379.3L564.2 382.0L561.5 384.7L558.8 382.0Z"/><path d="M561.5 392.7L564.2 395.4L561.5 398.1L558.8 395.4Z"/><path d="M561.5 406.1L564.2 408.8L561.5 411.5L558.8 408.8Z"/><path d="M561.5 419.5L564.2 422.2L561.5 424.9L558.8 422.2Z"/><path d="M561.5 432.9L564.2 435.6L561.5 438.3L558.8 435.6Z"/><path d="M561.5 446.3L564.2 449.0L561.5 451.7L558.8 449.0Z"/><path d="M561.5 459.7L564.2 462.4L561.5 465.1L558.8 462.4Z"/><path d="M561.5 473.1L564.2 475.8L561.5 478.5L558.8 475.8Z"/><path d="M561.5 486.5L564.2 489.2L561.5 491.9L558.8 489.2Z"/><path d="M561.5 499.9L564.2 502.6L561.5 505.3L558.8 502.6Z"/><path d="M561.5 513.3L564.2 516.0L561.5 518.7L558.8 516.0Z"/><path d="M561.5 526.7L564.2 529.4L561.5 532.1L558.8 529.4Z"/><path d="M561.5 540.1L564.2 542.8L561.5 545.5L558.8 542.8Z"/><path d="M561.5 553.5L564.2 556.2L561.5 558.9L558.8 556.2Z"/><path d="M561.5 566.9L564.2 569.6L561.5 572.3L558.8 569.6Z"/><path d="M561.5 580.3L564.2 583.0L561.5 585.7L558.8 583.0Z"/><path d="M561.5 593.7L564.2 596.4L561.5 599.1L558.8 596.4Z"/><path d="M561.5 607.1L564.2 609.8L561.5 612.5L558.8 609.8Z"/><path d="M561.5 620.5L564.2 623.2L561.5 625.9L558.8 623.2Z"/><path d="M561.5 633.9L564.2 636.6L561.5 639.3L558.8 636.6Z"/><path d="M561.5 647.3L564.2 650.0L561.5 652.7L558.8 650.0Z"/><path d="M561.5 660.7L564.2 663.4L561.5 666.1L558.8 663.4Z"/><path d="M561.5 674.1L564.2 676.8L561.5 679.5L558.8 676.8Z"/><path d="M561.5 687.5L564.2 690.2L561.5 692.9L558.8 690.2Z"/><path d="M561.5 700.9L564.2 703.6L561.5 706.3L558.8 703.6Z"/><path d="M561.5 714.3L564.2 717.0L561.5 719.7L558.8 717.0Z"/><path d="M954.0 379.3L956.7 382.0L954.0 384.7L951.3 382.0Z"/><path d="M954.0 392.7L956.7 395.4L954.0 398.1L951.3 395.4Z"/><path d="M954.0 406.1L956.7 408.8L954.0 411.5L951.3 408.8Z"/><path d="M954.0 419.5L956.7 422.2L954.0 424.9L951.3 422.2Z"/><path d="M954.0 432.9L956.7 435.6L954.0 438.3L951.3 435.6Z"/><path d="M954.0 446.3L956.7 449.0L954.0 451.7L951.3 449.0Z"/><path d="M954.0 459.7L956.7 462.4L954.0 465.1L951.3 462.4Z"/><path d="M954.0 473.1L956.7 475.8L954.0 478.5L951.3 475.8Z"/><path d="M954.0 486.5L956.7 489.2L954.0 491.9L951.3 489.2Z"/><path d="M954.0 499.9L956.7 502.6L954.0 505.3L951.3 502.6Z"/><path d="M954.0 513.3L956.7 516.0L954.0 518.7L951.3 516.0Z"/><path d="M954.0 526.7L956.7 529.4L954.0 532.1L951.3 529.4Z"/><path d="M954.0 540.1L956.7 542.8L954.0 545.5L951.3 542.8Z"/><path d="M954.0 553.5L956.7 556.2L954.0 558.9L951.3 556.2Z"/><path d="M954.0 566.9L956.7 569.6L954.0 572.3L951.3 569.6Z"/><path d="M954.0 580.3L956.7 583.0L954.0 585.7L951.3 583.0Z"/><path d="M954.0 593.7L956.7 596.4L954.0 599.1L951.3 596.4Z"/><path d="M954.0 607.1L956.7 609.8L954.0 612.5L951.3 609.8Z"/><path d="M954.0 620.5L956.7 623.2L954.0 625.9L951.3 623.2Z"/><path d="M954.0 633.9L956.7 636.6L954.0 639.3L951.3 636.6Z"/><path d="M954.0 647.3L956.7 650.0L954.0 652.7L951.3 650.0Z"/><path d="M954.0 660.7L956.7 663.4L954.0 666.1L951.3 663.4Z"/><path d="M954.0 674.1L956.7 676.8L954.0 679.5L951.3 676.8Z"/><path d="M954.0 687.5L956.7 690.2L954.0 692.9L951.3 690.2Z"/><path d="M954.0 700.9L956.7 703.6L954.0 706.3L951.3 703.6Z"/><path d="M954.0 714.3L956.7 717.0L954.0 719.7L951.3 717.0Z"/><path d="M562.0 379.3L564.7 382.0L562.0 384.7L559.3 382.0Z"/><path d="M570.9 370.4L573.6 373.1L570.9 375.8L568.2 373.1Z"/><path d="M579.9 361.4L582.6 364.1L579.9 366.8L577.2 364.1Z"/><path d="M588.8 352.5L591.5 355.2L588.8 357.9L586.1 355.2Z"/><path d="M597.7 343.6L600.4 346.3L597.7 349.0L595.0 346.3Z"/><path d="M606.7 334.6L609.4 337.3L606.7 340.0L604.0 337.3Z"/><path d="M615.6 325.7L618.3 328.4L615.6 331.1L612.9 328.4Z"/><path d="M624.5 316.8L627.2 319.5L624.5 322.2L621.8 319.5Z"/><path d="M633.5 307.8L636.2 310.5L633.5 313.2L630.8 310.5Z"/><path d="M642.4 298.9L645.1 301.6L642.4 304.3L639.7 301.6Z"/><path d="M651.3 290.0L654.0 292.7L651.3 295.4L648.6 292.7Z"/><path d="M660.2 281.1L663.0 283.8L660.2 286.4L657.5 283.8Z"/><path d="M669.2 272.1L671.9 274.8L669.2 277.5L666.5 274.8Z"/><path d="M678.1 263.2L680.8 265.9L678.1 268.6L675.4 265.9Z"/><path d="M687.0 254.3L689.7 257.0L687.0 259.7L684.3 257.0Z"/><path d="M696.0 245.3L698.7 248.0L696.0 250.7L693.3 248.0Z"/><path d="M704.9 236.4L707.6 239.1L704.9 241.8L702.2 239.1Z"/><path d="M713.8 227.5L716.5 230.2L713.8 232.9L711.1 230.2Z"/><path d="M722.8 218.5L725.5 221.2L722.8 223.9L720.1 221.2Z"/><path d="M731.7 209.6L734.4 212.3L731.7 215.0L729.0 212.3Z"/><path d="M740.6 200.7L743.3 203.4L740.6 206.1L737.9 203.4Z"/><path d="M749.6 191.7L752.3 194.4L749.6 197.1L746.9 194.4Z"/><path d="M758.5 182.8L761.2 185.5L758.5 188.2L755.8 185.5Z"/><path d="M954.0 379.3L956.7 382.0L954.0 384.7L951.3 382.0Z"/><path d="M945.1 370.4L947.8 373.1L945.1 375.8L942.4 373.1Z"/><path d="M936.1 361.4L938.8 364.1L936.1 366.8L933.4 364.1Z"/><path d="M927.2 352.5L929.9 355.2L927.2 357.9L924.5 355.2Z"/><path d="M918.3 343.6L921.0 346.3L918.3 349.0L915.6 346.3Z"/><path d="M909.3 334.6L912.0 337.3L909.3 340.0L906.6 337.3Z"/><path d="M900.4 325.7L903.1 328.4L900.4 331.1L897.7 328.4Z"/><path d="M891.5 316.8L894.2 319.5L891.5 322.2L888.8 319.5Z"/><path d="M882.5 307.8L885.2 310.5L882.5 313.2L879.8 310.5Z"/><path d="M873.6 298.9L876.3 301.6L873.6 304.3L870.9 301.6Z"/><path d="M864.7 290.0L867.4 292.7L864.7 295.4L862.0 292.7Z"/><path d="M855.8 281.1L858.5 283.8L855.8 286.4L853.0 283.8Z"/><path d="M846.8 272.1L849.5 274.8L846.8 277.5L844.1 274.8Z"/><path d="M837.9 263.2L840.6 265.9L837.9 268.6L835.2 265.9Z"/><path d="M829.0 254.3L831.7 257.0L829.0 259.7L826.3 257.0Z"/><path d="M820.0 245.3L822.7 248.0L820.0 250.7L817.3 248.0Z"/><path d="M811.1 236.4L813.8 239.1L811.1 241.8L808.4 239.1Z"/><path d="M802.2 227.5L804.9 230.2L802.2 232.9L799.5 230.2Z"/><path d="M793.2 218.5L795.9 221.2L793.2 223.9L790.5 221.2Z"/><path d="M784.3 209.6L787.0 212.3L784.3 215.0L781.6 212.3Z"/><path d="M775.4 200.7L778.1 203.4L775.4 206.1L772.7 203.4Z"/><path d="M766.4 191.7L769.1 194.4L766.4 197.1L763.7 194.4Z"/><path d="M757.5 182.8L760.2 185.5L757.5 188.2L754.8 185.5Z"/></g>
<line x1="561.5" y1="717" x2="581" y2="717" stroke="#111" stroke-width="1"/><rect x="578" y="715.5" width="4" height="3" fill="#22e0ff"/>
<rect x="1086.2" y="160.7" width="17" height="56.6" fill="#ff0000" stroke="#111" stroke-width="0.9"/><rect x="1086.2" y="217.3" width="17" height="56.6" fill="#ff8000" stroke="#111" stroke-width="0.9"/><rect x="1086.2" y="274.0" width="17" height="56.6" fill="#ffff00" stroke="#111" stroke-width="0.9"/><rect x="1086.2" y="330.6" width="17" height="56.6" fill="#b4ff00" stroke="#111" stroke-width="0.9"/><rect x="1086.2" y="387.2" width="17" height="56.6" fill="#00ff00" stroke="#111" stroke-width="0.9"/><rect x="1086.2" y="443.9" width="17" height="56.6" fill="#00ffff" stroke="#111" stroke-width="0.9"/><rect x="1086.2" y="500.5" width="17" height="56.6" fill="#00a8ff" stroke="#111" stroke-width="0.9"/><rect x="1086.2" y="557.1" width="17" height="56.6" fill="#0050ff" stroke="#111" stroke-width="0.9"/><rect x="1086.2" y="613.7" width="17" height="56.6" fill="#0000a8" stroke="#111" stroke-width="0.9"/><rect x="1086.2" y="670.4" width="17" height="56.6" fill="#800080" stroke="#111" stroke-width="0.9"/><!--/CHART-->
<g font-family="Liberation Sans" font-size="10.2" fill="#1a1a1a" text-anchor="middle"><text x="1059" y="165.3">12.9</text><text x="1059" y="221.9">10.2</text><text x="1059" y="278.6">7.6</text><text x="1059" y="335.2">4.9</text><text x="1059" y="391.8">2.3</text><text x="1059" y="448.5">-0.4</text><text x="1059" y="505.1">-3.0</text><text x="1059" y="561.7">-5.7</text><text x="1059" y="618.3">-8.4</text><text x="1059" y="675.0">-11.0</text><text x="1059" y="731.6">-13.7</text></g>
<g font-family="Liberation Sans" font-size="12" fill="#333"><text x="551.5" y="729">Y</text><text x="579.5" y="729">X</text></g>
</g>
</svg>
<!--/CHARTSVG-->
  <div id="tb" class="a"></div>
  <div class="a" style="left:19.5px;top:19.5px;width:12.5px;height:12.5px;border-radius:50%;background:#ee6a5f;box-shadow:inset 0 0 0 0.5px #d35a50"></div>
  <div class="a" style="left:39.5px;top:19.5px;width:12.5px;height:12.5px;border-radius:50%;background:#f5be4f;box-shadow:inset 0 0 0 0.5px #d9a53c"></div>
  <div class="a" style="left:59.5px;top:19.5px;width:12.5px;height:12.5px;border-radius:50%;background:#62c655;box-shadow:inset 0 0 0 0.5px #52a848"></div>
  <svg class="a" style="left:0;top:0" width="1272" height="52" viewBox="3.5 7.5 1272 52">
    <g fill="none" stroke="#6e6e6e" stroke-width="1.5" stroke-linecap="round" stroke-linejoin="round">
      <!-- sidebar icon -->
      <rect x="227.3" y="26.3" width="17.6" height="13.4" rx="2.2"/>
      <line x1="233.5" y1="26.3" x2="233.5" y2="39.7"/>
      <line x1="229.6" y1="29.3" x2="231.3" y2="29.3" stroke-width="1"/>
      <line x1="229.6" y1="31.3" x2="231.3" y2="31.3" stroke-width="1"/>
      <line x1="229.6" y1="33.3" x2="231.3" y2="33.3" stroke-width="1"/>
      <path d="M251.8 32 L255 35.2 L258.2 32"/>
      <!-- zoom out -->
      <circle cx="635" cy="31.8" r="5.8"/>
      <line x1="639.2" y1="36" x2="643.5" y2="40.3" stroke-width="1.8"/>
      <line x1="632" y1="31.8" x2="638" y2="31.8"/>
      <!-- zoom in -->
      <circle cx="681.3" cy="31.8" r="5.8"/>
      <line x1="685.5" y1="36" x2="689.8" y2="40.3" stroke-width="1.8"/>
      <line x1="678.3" y1="31.8" x2="684.3" y2="31.8"/>
      <line x1="681.3" y1="28.8" x2="681.3" y2="34.8"/>
      <!-- share -->
      <path d="M733.2 28.4 H731.4 Q730.1 28.4 730.1 29.8 V39.6 Q730.1 40.9 731.4 40.9 H742 Q743.3 40.9 743.3 39.6 V29.8 Q743.3 28.4 742 28.4 H740.2"/>
      <line x1="736.7" y1="23.8" x2="736.7" y2="34.6"/>
      <path d="M734.2 26.2 L736.7 23.6 L739.2 26.2"/>
      <!-- pencil -->
      <path d="M789.2 36.6 L790.3 32.6 L799.4 23.5 Q800.6 22.4 801.8 23.5 L802.5 24.2 Q803.6 25.4 802.5 26.6 L793.4 35.7 Z"/>
      <line x1="797.6" y1="25.3" x2="800.8" y2="28.4" stroke-width="1.1"/>
      <line x1="788.2" y1="39.6" x2="804.3" y2="39.6" stroke-width="1.3"/>
      <path d="M828.2 32.4 L831.2 35.4 L834.2 32.4"/>
      <!-- rotate -->
      <rect x="859.6" y="28.9" width="10.6" height="10.9" rx="1.6"/>
      <path d="M868.8 24.6 Q874.4 24.6 874.6 29.4"/>
      <path d="M870.6 22.6 L868.2 24.6 L870.6 26.6 Z" fill="#6e6e6e" stroke-width="1"/>
      <!-- markup -->
      <circle cx="912" cy="33" r="7.9"/>
      <path d="M908.7 40.3 L909 38.2 L911.9 30.2 L914.8 38.2 L915.1 40.3" stroke-width="1.3"/>
      <path d="M910.8 33.2 L911.9 29.4 L913 33.2 Z" fill="#6e6e6e" stroke-width="0.8"/>
    </g>
    <line x1="817.5" y1="24.5" x2="817.5" y2="42.5" stroke="#ececec" stroke-width="1"/>
    <rect x="943.8" y="20.5" width="319.5" height="26.5" rx="6" fill="#fff" stroke="#ededed" stroke-width="1"/>
    <g fill="none" stroke="#505050" stroke-width="1.35" stroke-linecap="round">
      <circle cx="958.7" cy="32.9" r="5.7"/>
      <line x1="962.9" y1="37" x2="967.2" y2="40.8" stroke-width="1.6"/>
    </g>
  </svg>
  <div class="t" style="left:269.5px;top:12.5px;font-size:13.3px;font-weight:700;color:#363636">LoadFINHA100.pdf</div>
  <div class="t" style="left:269.5px;top:27px;font-size:11.6px;color:#858585">Страница 25 из 28</div>
  <div class="t" style="left:971px;top:19.5px;font-size:13.4px;color:#b4b4b4">Поиск</div>
</div>
</body></html>
